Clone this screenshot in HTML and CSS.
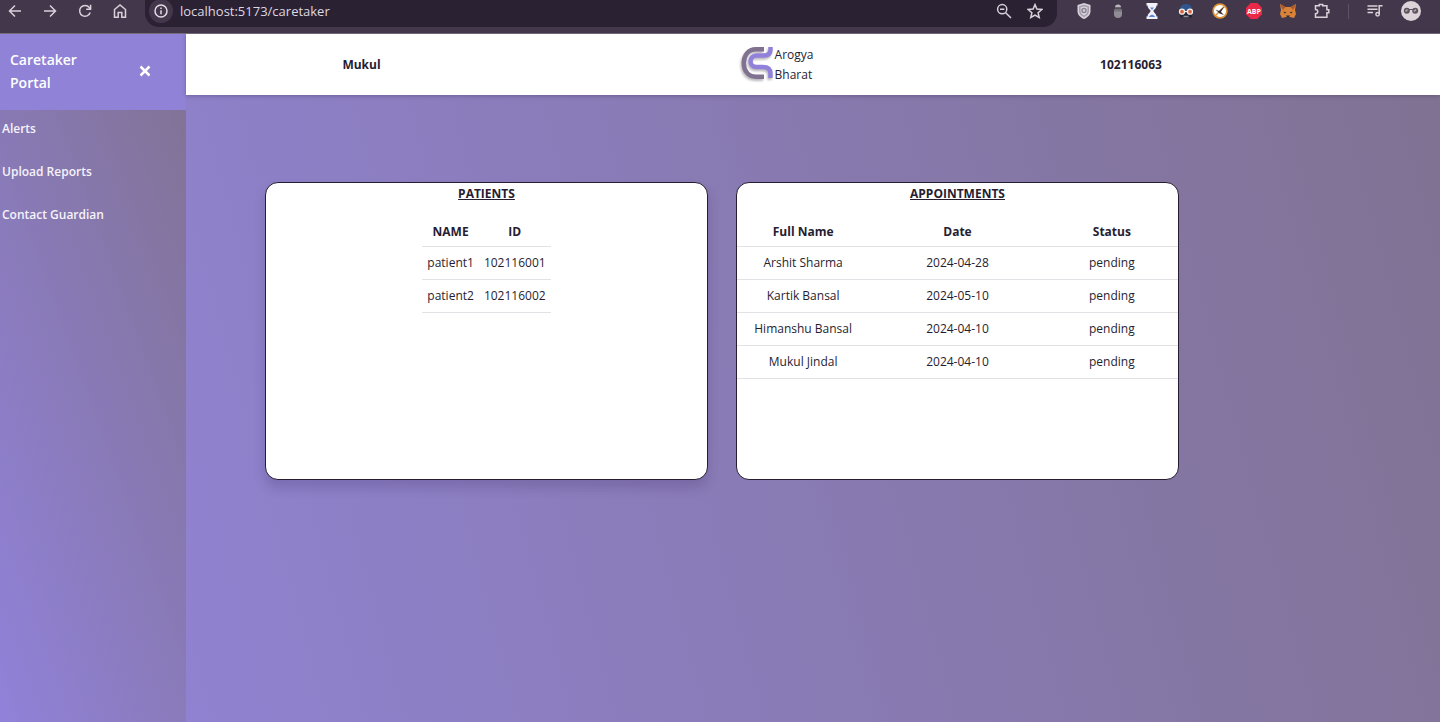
FILE: index.html
```html
<!DOCTYPE html>
<html lang="en">
<head>
<meta charset="utf-8">
<title>Caretaker Portal</title>
<link rel="stylesheet" href="styles.css">
</head>
<body>
<div class="toolbar">
  <div class="nav-buttons">
    <button class="icon-button" aria-label="Back"><svg viewBox="0 0 16 16"><path d="M14 8H2.500M8 2.500 2.500 8 8 13.500"/></svg></button>
    <button class="icon-button" aria-label="Forward"><svg viewBox="0 0 16 16"><path d="M2 8h11.500M8 2.500 13.500 8 8 13.500"/></svg></button>
    <button class="icon-button" aria-label="Reload"><svg viewBox="0 0 16 16"><path d="M13.200 9.500A5.400 5.400 0 1 1 12.300 4.500L13.500 6M13.600 1.800V6.200H9.200"/></svg></button>
    <button class="icon-button" aria-label="Home"><svg viewBox="0 0 16 16"><path d="M2.500 6.500 8 2l5.500 4.500V14.200H9.800V9.500H6.200v4.700H2.500z"/></svg></button>
  </div>
  <div class="address">
    <button class="site-info" aria-label="Site information"><svg viewBox="0 0 16 16"><circle cx="8" cy="8" r="6"/><path d="M8 7.200v4M8 4.500v1.400"/></svg></button>
    <input class="url" type="text" aria-label="Address" value="localhost:5173/caretaker">
    <button class="icon-button" aria-label="Zoom"><svg viewBox="0 0 16 16"><circle cx="6.200" cy="6.200" r="4.600"/><path d="M9.700 9.700 15 15M4 6.200h4.400"/></svg></button>
    <button class="icon-button" aria-label="Bookmark"><svg viewBox="0 0 16 16"><path d="m8 1.600 1.900 4.500 4.900.4-3.700 3.200 1.100 4.800L8 12l-4.200 2.500 1.100-4.800L1.200 6.500l4.900-.4z"/></svg></button>
  </div>
  <div class="extensions">
    <button class="icon-button" aria-label="Shield"><svg class="art" viewBox="0 0 16 16"><path fill="#d8d2dc" d="M8 0l6.500 2v6c0 4-3 6.500-6.500 8-3.500-1.500-6.500-4-6.500-8V2z"/><path fill="none" stroke="#a49caa" d="M8 2.500l4.200 1.200V8c0 2.700-2 4.300-4.200 5.400C5.800 12.300 3.800 10.700 3.800 8V3.700z"/><circle cx="8" cy="7.500" r="2" fill="none" stroke="#8b8391"/></svg></button>
    <button class="icon-button" aria-label="Privacy"><svg class="art" viewBox="0 0 16 16"><path fill="#bbb7be" d="M5 4.500a3 3 0 0 1 6 0z"/><path fill="#57515c" d="M5 4.500h6v2H5z"/><path fill="#918d95" d="M4 6.500h8v4.500a4 4 0 0 1-8 0z"/><path fill="#77727b" d="M4 6.500h8v2H4z"/></svg></button>
    <button class="icon-button" aria-label="Timer"><svg class="art" viewBox="0 0 16 16"><path fill="#f3f1fa" d="M2.500 0h11v2.500h-1C12.500 5 10 6.500 9.300 8c.7 1.500 3.200 3 3.200 5.500h1V16h-11v-2.500h1c0-2.500 2.500-4 3.200-5.500C6 6.500 3.500 5 3.500 2.500h-1z"/><path fill="#5b87dd" d="M6 4.500h4L8 7zM5 14c0-1.500 2-2 3-2.500 1 .5 3 1 3 2.500z"/></svg></button>
    <button class="icon-button" aria-label="Incognito reader"><svg class="art" viewBox="0 0 16 16"><path fill="#30558f" d="M2 7C2 3 4.500 1 8 1s6 2 6 6z"/><path fill="#242331" d="M2 7h12v7.500H2z"/><path stroke="#8f8d97" d="M5.500 13.500h5"/><circle cx="4" cy="8.700" r="2.500" fill="#d9633f" stroke="#eee" stroke-width="1.300"/><circle cx="12" cy="8.700" r="2.500" fill="#d9633f" stroke="#eee" stroke-width="1.300"/><path stroke="#eee" d="M6.500 8.500h3"/></svg></button>
    <button class="icon-button" aria-label="Cleaner"><svg class="art" viewBox="0 0 16 16"><circle cx="8" cy="8" r="6.900" fill="#fff" stroke="#dc9038" stroke-width="1.600"/><path stroke="#dc9038" stroke-width="1.500" d="m3.500 12.500 9-9"/><path fill="#342d35" d="M3.500 6.500 7 8l5-4.500L9 9l3 3-4.500-1.500z"/></svg></button>
    <button class="icon-button" aria-label="Ad blocker"><svg class="art" viewBox="0 0 16 16"><path fill="#ea2847" d="M4.700 0h6.600L16 4.700v6.600L11.300 16H4.700L0 11.300V4.700z"/><text class="abp" x="8" y="10.500" text-anchor="middle">ABP</text></svg></button>
    <button class="icon-button" aria-label="Wallet"><svg class="art" viewBox="0 0 16 16"><path fill="#d98339" d="M0 1l5.500 3h5L16 1l-1 6 1 4-2 4-4-1H6l-4 1-2-4 1-4z"/><path fill="#a65a2c" d="M0 1l5.500 3L3 7zM16 1l-5.500 3L13 7z"/><path fill="#2f2935" d="M3.500 8.500l3 1-2 1zM12.500 8.500l-3 1 2 1zM6 12.500h4L9 14H7z"/></svg></button>
    <button class="icon-button" aria-label="Extensions"><svg viewBox="0 0 16 16"><path d="M1.500 2.800h3.800V1.600h3.400v1.200h4.200v4H14.800v3h-1.900v4.500H1.500v-3.600c3 0 3-4.200 0-4.200z"/></svg></button>
    <span class="divider"></span>
    <button class="icon-button" aria-label="Media"><svg viewBox="0 0 16 16"><path d="M.5 3h10M.5 6.300h10M.5 9.600h5.500M12.200 11V2.800h3.300"/><circle cx="10.600" cy="11.300" r="1.700"/></svg></button>
    <button class="profile" aria-label="Profile"><svg class="art" viewBox="0 0 20 20"><circle cx="10" cy="10" r="10" fill="#dcd2d8"/><path stroke="#5c545d" d="M8 8.500h4"/><circle cx="5.800" cy="9.800" r="3" fill="#5c545d"/><circle cx="14.200" cy="9.800" r="3" fill="#5c545d"/><path stroke="#b1a8b0" stroke-width="1.500" d="m4.500 10.500 2-2M13 10.500l2-2"/></svg></button>
  </div>
</div>
<div class="app">
  <aside class="sidebar">
    <div class="sidebar-head">
      <h1 class="portal-title">Caretaker Portal</h1>
      <button class="close" aria-label="Close menu"><svg viewBox="0 0 12 12"><path d="M1.500 1.500l9 9M10.500 1.500l-9 9"/></svg></button>
    </div>
    <nav class="menu">
      <a class="menu-link" href="#alerts">Alerts</a>
      <a class="menu-link" href="#reports">Upload Reports</a>
      <a class="menu-link" href="#guardian">Contact Guardian</a>
    </nav>
  </aside>
  <div class="content">
    <header class="header">
      <strong>Mukul</strong>
      <div class="brand">
        <svg class="logo" viewBox="0 0 34 38"><g fill="none" stroke-width="4.500"><path stroke="#7f718f" d="M23 3.300H15C7 3.300 2.800 9.500 2.800 17S7 30.700 15 30.700h8"/><path stroke="#9181db" d="M29.500 1v2.500q0 6-6.500 6h-7.500c-8 0-8 11.500 0 11.500H22q7.500 0 7.500 6.500V32"/></g></svg>
        <span class="brand-name">Arogya<br>Bharat</span>
      </div>
      <strong>102116063</strong>
    </header>
    <main class="cards">
      <section class="card card-patients">
        <h2 class="card-title">PATIENTS</h2>
        <table class="table table-patients">
          <thead><tr><th>NAME</th><th>ID</th></tr></thead>
          <tbody>
            <tr><td>patient1</td><td>102116001</td></tr>
            <tr><td>patient2</td><td>102116002</td></tr>
          </tbody>
        </table>
      </section>
      <section class="card card-appointments">
        <h2 class="card-title">APPOINTMENTS</h2>
        <table class="table table-appointments">
          <thead><tr><th>Full Name</th><th class="date">Date</th><th>Status</th></tr></thead>
          <tbody>
            <tr><td>Arshit Sharma</td><td>2024-04-28</td><td>pending</td></tr>
            <tr><td>Kartik Bansal</td><td>2024-05-10</td><td>pending</td></tr>
            <tr><td>Himanshu Bansal</td><td>2024-04-10</td><td>pending</td></tr>
            <tr><td>Mukul Jindal</td><td>2024-04-10</td><td>pending</td></tr>
          </tbody>
        </table>
      </section>
    </main>
  </div>
</div>
</body>
</html>
```
FILE: styles.css
```css
* { box-sizing: border-box; }
body {
  margin: 0;
  min-height: 100vh;
  display: flex;
  flex-direction: column;
  font: 12px/20px "Open Sans", "Noto Sans", sans-serif;
  color: #271d31;
}
button { border: 0; padding: 0; background: none; display: flex; }
svg { display: block; }

.toolbar {
  height: 34px;
  display: flex;
  align-items: flex-start;
  background: #43384b;
  border-bottom: 1px solid #786d7d;
}
.icon-button svg {
  width: 16px;
  height: 16px;
  fill: none;
  stroke: #d8d1da;
  stroke-width: 1.5;
}
.icon-button .art, .profile .art { stroke: none; }
.nav-buttons { display: flex; gap: 19px; padding: 3px 17px 0 7px; }
.address {
  flex: 1;
  height: 27px;
  display: flex;
  align-items: center;
  gap: 15px;
  padding: 0 14px 5px 4px;
  background: #2a2133;
  border-radius: 0 0 14px 14px;
}
.site-info { padding: 4px; border-radius: 50%; background: #43384b; }
.site-info svg { width: 16px; height: 16px; fill: none; stroke: #e2dbe3; stroke-width: 1.5; }
.url {
  flex: 1;
  min-width: 0;
  border: 0;
  padding: 0;
  margin-left: -8px;
  background: none;
  color: #ded7e0;
  font: 13px/20px "Open Sans", sans-serif;
}
.extensions { display: flex; align-items: center; gap: 18px; height: 22px; padding: 0 19px 0 19px; }
.divider { width: 1px; height: 15px; background: #5d526b; }
.profile svg { width: 20px; height: 20px; }
.abp { font: bold 7px "Open Sans", sans-serif; fill: #fff; }

.app { flex: 1; display: flex; }
.sidebar { width: 186px; background: linear-gradient(70deg, #9181d9, #807292); }
.sidebar-head {
  display: flex;
  align-items: center;
  justify-content: space-between;
  padding: 14px 35px 16px 10px;
  background: #9082d6;
}
.portal-title { margin: 0; width: 90px; font-size: 14px; font-weight: 600; line-height: 23px; color: #fff; }
.close svg { width: 12px; height: 12px; stroke: #fff; stroke-width: 2.5; }
.menu { display: flex; flex-direction: column; gap: 22px; padding: 8px 2px; }
.menu-link { color: #f6f2fa; font-weight: 600; line-height: 21px; text-decoration: none; }

.content {
  flex: 1;
  display: flex;
  flex-direction: column;
  background: linear-gradient(75deg, #9082d0, #807292);
}
.header {
  height: 61px;
  display: grid;
  grid-template-columns: 351fr 480fr 228fr 195fr;
  align-items: center;
  justify-items: center;
  background: #fff;
  box-shadow: 0 1px 4px rgba(40, 30, 60, 0.3);
}
.brand { display: flex; align-items: center; }
.logo { width: 34px; height: 38px; filter: drop-shadow(-1px 2px 1px rgba(60, 50, 70, 0.35)); }

.cards {
  display: flex;
  align-items: flex-start;
  gap: 28px;
  padding: 87px 261px 40px 79px;
}
.card {
  flex: 1;
  min-height: 298px;
  background: #fff;
  border: 1px solid #271d31;
  border-radius: 13px;
}
.card-patients { box-shadow: 0 8px 12px rgba(50, 35, 90, 0.2); }
.card-title {
  margin: 0 0 12px;
  text-align: center;
  font-size: 12px;
  line-height: 21px;
  text-decoration: underline;
}
.table { border-collapse: collapse; margin: 0 auto; text-align: center; }
.table th, .table td { padding: 6px; border-bottom: 1px solid #e3e1e5; }
.table th { padding-bottom: 4px; }
.table-patients td { padding: 6px 5px; }
.table-appointments { width: 100%; table-layout: fixed; }
.date { width: 40%; }
```
